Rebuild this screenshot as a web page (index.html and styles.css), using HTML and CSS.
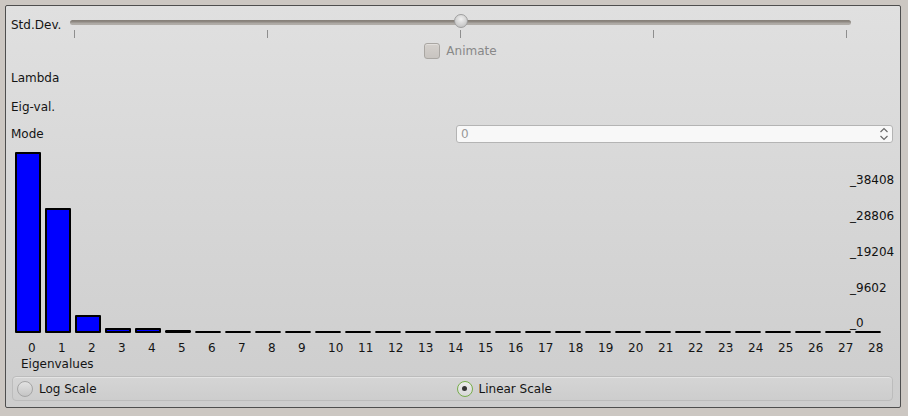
FILE: index.html
```html
<!DOCTYPE html>
<html>
<head>
<meta charset="utf-8">
<link rel="stylesheet" href="styles.css">
</head>
<body>
<div class="panel">
  <div class="row slider-row">
    <div class="label slider-label">Std.Dev.</div>
    <div class="slider">
      <div class="groove"></div>
      <div class="handle"></div>
      <div class="ticks"><span></span><span></span><span></span><span></span><span></span></div>
    </div>
  </div>
  <div class="animate-row">
    <div class="checkbox"></div>
    <span class="animate-text">Animate</span>
  </div>
  <div class="label lambda">Lambda</div>
  <div class="label eigval">Eig-val.</div>
  <div class="row mode-row">
    <div class="label">Mode</div>
    <div class="spin">
      <span class="spin-val">0</span>
      <svg class="spin-arrows" width="10" height="16" viewBox="0 0 10 16">
        <path d="M1.5 6 L5 2.5 L8.5 6" fill="none" stroke="#6a6a6a" stroke-width="1.2"/>
        <path d="M1.5 10 L5 13.5 L8.5 10" fill="none" stroke="#6a6a6a" stroke-width="1.2"/>
      </svg>
    </div>
  </div>
  <div class="chart">
    <div class="bars">
      <div class="bar" style="height:181px"></div>
      <div class="bar" style="height:125px"></div>
      <div class="bar" style="height:18px"></div>
      <div class="bar" style="height:5px"></div>
      <div class="bar" style="height:5px"></div>
      <div class="bar flat" style="height:3px"></div>
      <div class="bar flat"></div>
      <div class="bar flat"></div>
      <div class="bar flat"></div>
      <div class="bar flat"></div>
      <div class="bar flat"></div>
      <div class="bar flat"></div>
      <div class="bar flat"></div>
      <div class="bar flat"></div>
      <div class="bar flat"></div>
      <div class="bar flat"></div>
      <div class="bar flat"></div>
      <div class="bar flat"></div>
      <div class="bar flat"></div>
      <div class="bar flat"></div>
      <div class="bar flat"></div>
      <div class="bar flat"></div>
      <div class="bar flat"></div>
      <div class="bar flat"></div>
      <div class="bar flat"></div>
      <div class="bar flat"></div>
      <div class="bar flat"></div>
      <div class="bar flat"></div>
      <div class="bar flat"></div>
    </div>
    <div class="ylabel" style="top:21px">_38408</div>
    <div class="ylabel" style="top:57px">_28806</div>
    <div class="ylabel" style="top:93px">_19204</div>
    <div class="ylabel" style="top:129px">_9602</div>
    <div class="ylabel" style="top:164px">_0</div>
  </div>
  <div class="xlabels">
    <span>0</span><span>1</span><span>2</span><span>3</span><span>4</span><span>5</span><span>6</span><span>7</span><span>8</span><span>9</span>
    <span>10</span><span>11</span><span>12</span><span>13</span><span>14</span><span>15</span><span>16</span><span>17</span><span>18</span><span>19</span>
    <span>20</span><span>21</span><span>22</span><span>23</span><span>24</span><span>25</span><span>26</span><span>27</span><span>28</span>
  </div>
  <div class="label caption">Eigenvalues</div>
  <div class="radio-group">
    <div class="radio-item"><span class="radio"></span><span>Log Scale</span></div>
    <div class="radio-item"><span class="radio checked"><span class="dot"></span></span><span>Linear Scale</span></div>
  </div>
</div>
</body>
</html>
```

FILE: styles.css
```css
html, body {
  margin: 0;
  padding: 0;
  background: #ccc7c2;
  width: 908px;
  height: 416px;
  overflow: hidden;
}
body {
  font-family: "DejaVu Sans", sans-serif;
  font-size: 12px;
  color: #141414;
}
.panel {
  box-sizing: border-box;
  margin: 5px 0 0 5px;
  width: 896px;
  height: 403px;
  border: 1px solid #4e4e4e;
  border-radius: 2px;
  background: linear-gradient(#e0e0e0, #cdcdcd);
  padding: 0 7px 0 5px;
  display: flex;
  flex-direction: column;
}
.label {
  line-height: 14px;
  height: 14px;
  white-space: nowrap;
  flex: none;
}
.row {
  display: flex;
  flex: none;
}
.slider-row {
  margin-top: 7px;
  height: 25px;
}
.slider-label {
  width: 59px;
  padding-top: 5px;
}
.slider {
  position: relative;
  width: 781px;
}
.groove {
  margin-top: 7px;
  height: 5px;
  border-radius: 3px;
  background: linear-gradient(#857f78 0, #8f8983 40%, #aca8a3 60%, #b2aea9 100%);
}
.handle {
  position: absolute;
  left: 384px;
  top: 1px;
  width: 14px;
  height: 14px;
  box-sizing: border-box;
  border-radius: 50%;
  border: 1px solid #9e9e9e;
  background: radial-gradient(circle at 50% 35%, #f0f0f0, #c4c4c4 80%);
}
.ticks {
  margin-top: 5px;
  height: 8px;
  padding: 0 4px 0 4px;
  display: flex;
  justify-content: space-between;
}
.ticks span {
  width: 1px;
  height: 8px;
  background: #8e8e8e;
}
.animate-row {
  flex: none;
  margin-top: 5px;
  margin-left: 59px;
  width: 781px;
  height: 16px;
  display: flex;
  justify-content: center;
  align-items: center;
  gap: 6px;
}
.checkbox {
  box-sizing: border-box;
  width: 16px;
  height: 16px;
  border: 1px solid #a9a6a2;
  border-radius: 3px;
  background: linear-gradient(#d4d0cc, #c8c4c0);
  box-shadow: inset 0 1px 0 #e2dfdc;
}
.animate-text {
  color: #888888;
  line-height: 14px;
}
.lambda {
  margin-top: 12px;
}
.eigval {
  margin-top: 15px;
}
.mode-row {
  margin-top: 11px;
  height: 18px;
  align-items: center;
  justify-content: space-between;
}
.spin {
  box-sizing: border-box;
  width: 437px;
  height: 18px;
  border: 1px solid #b4b4b4;
  border-radius: 3px;
  background: #f8f8f8;
  display: flex;
  align-items: center;
  justify-content: space-between;
  padding: 0 3px 0 4px;
}
.spin-val {
  color: #999999;
  line-height: 14px;
}
.spin-arrows {
  display: block;
}
.chart {
  flex: none;
  position: relative;
  margin-top: 9px;
  height: 181px;
}
.bars {
  height: 181px;
  padding-left: 4px;
  display: flex;
  align-items: flex-end;
  gap: 4px;
}
.bar {
  box-sizing: border-box;
  width: 26px;
  background: #0000ff;
  border: 2px solid #000;
  border-radius: 1px;
}
.bar.flat {
  height: 2px;
  border: 1px solid #000;
  background: #000;
}
.ylabel {
  position: absolute;
  left: 839px;
  line-height: 14px;
  color: #111;
}
.xlabels {
  flex: none;
  margin-top: 8px;
  height: 14px;
  line-height: 14px;
  padding-left: 4px;
  display: flex;
}
.xlabels span {
  box-sizing: border-box;
  width: 30px;
  padding-left: 13px;
  flex: none;
  white-space: nowrap;
}
.caption {
  margin-top: 2px;
  padding-left: 10px;
}
.radio-group {
  flex: none;
  box-sizing: border-box;
  margin-top: 5px;
  margin-left: 1px;
  width: 881px;
  height: 25px;
  border: 1px solid #bcbcbc;
  border-radius: 4px;
  background: linear-gradient(#d5d5d5, #cdcdcd);
  box-shadow: inset 0 1px 0 #e4e4e4;
  display: grid;
  grid-template-columns: 1fr 1fr;
}
.radio-item {
  display: flex;
  align-items: center;
  gap: 6px;
  padding-left: 4px;
  line-height: 14px;
}
.radio {
  box-sizing: border-box;
  width: 16px;
  height: 16px;
  border-radius: 50%;
  border: 1px solid #a5a5a5;
  background: linear-gradient(#e2e2e2, #c5c5c5);
  display: flex;
  align-items: center;
  justify-content: center;
}
.radio.checked {
  border: 1.5px solid #76ad4a;
  background: linear-gradient(#ececec, #d8d8d8);
}
.dot {
  width: 5px;
  height: 5px;
  border-radius: 50%;
  background: #333;
}
```
